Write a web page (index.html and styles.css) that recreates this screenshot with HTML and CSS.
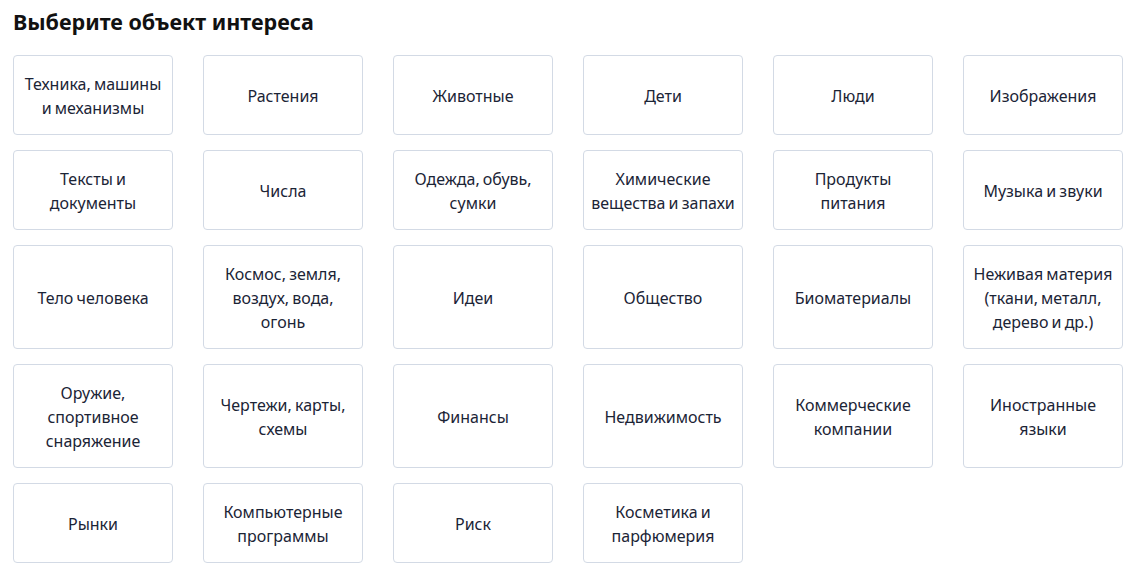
FILE: index.html
```html
<!doctype html>
<html lang="ru">
  <head>
    <meta charset="UTF-8" />
    <meta name="viewport" content="width=device-width, initial-scale=1.0" />
    <title>Выберите объект интереса</title>
    <link rel="stylesheet" href="styles.css">
  </head>
  <body>
    <div class="picker">
      <h2 class="picker-title">Выберите объект интереса</h2>
      <div class="topic-grid">
        <button class="topic">Техника, машины и механизмы</button>
        <button class="topic">Растения</button>
        <button class="topic">Животные</button>
        <button class="topic">Дети</button>
        <button class="topic">Люди</button>
        <button class="topic">Изображения</button>

        <button class="topic">Тексты и документы</button>
        <button class="topic">Числа</button>
        <button class="topic">Одежда, обувь, сумки</button>
        <button class="topic">Химические вещества и запахи</button>
        <button class="topic">Продукты питания</button>
        <button class="topic">Музыка и звуки</button>

        <button class="topic">Тело человека</button>
        <button class="topic">Космос, земля, воздух, вода, огонь</button>
        <button class="topic">Идеи</button>
        <button class="topic">Общество</button>
        <button class="topic">Биоматериалы</button>
        <button class="topic">Неживая материя (ткани, металл, дерево и др.)</button>

        <button class="topic">Оружие, спортивное снаряжение</button>
        <button class="topic">Чертежи, карты, схемы</button>
        <button class="topic">Финансы</button>
        <button class="topic">Недвижимость</button>
        <button class="topic">Коммерческие компании</button>
        <button class="topic">Иностранные языки</button>

        <button class="topic">Рынки</button>
        <button class="topic">Компьютерные программы</button>
        <button class="topic">Риск</button>
        <button class="topic">Косметика и парфюмерия</button>
      </div>
    </div>
  </body>
</html>
```

FILE: styles.css
```css
body {
  margin: 0;
  padding: 0;
  background-color: #ffffff;
  font-family: "Noto Sans", "Open Sans", sans-serif;
  color: #1b2436;
}

.picker {
  padding: 8px 13px;
}

.picker-title {
  margin: 0 0 19px 0;
  font-size: 21.5px;
  line-height: 28px;
  font-weight: 700;
  color: #111111;
}

.topic-grid {
  display: grid;
  grid-template-columns: repeat(6, 160px);
  column-gap: 30px;
  row-gap: 15px;
}

.topic {
  box-sizing: border-box;
  min-height: 80px;
  padding: 16px 7px 14px;
  display: flex;
  align-items: center;
  justify-content: center;
  text-align: center;
  font-family: inherit;
  font-size: 16px;
  line-height: 24px;
  word-spacing: -1px;
  color: #1b2436;
  background-color: #ffffff;
  border: 1px solid #d3dae5;
  border-radius: 4px;
  cursor: pointer;
}

.topic:hover {
  border-color: #9fb0c8;
}
```
